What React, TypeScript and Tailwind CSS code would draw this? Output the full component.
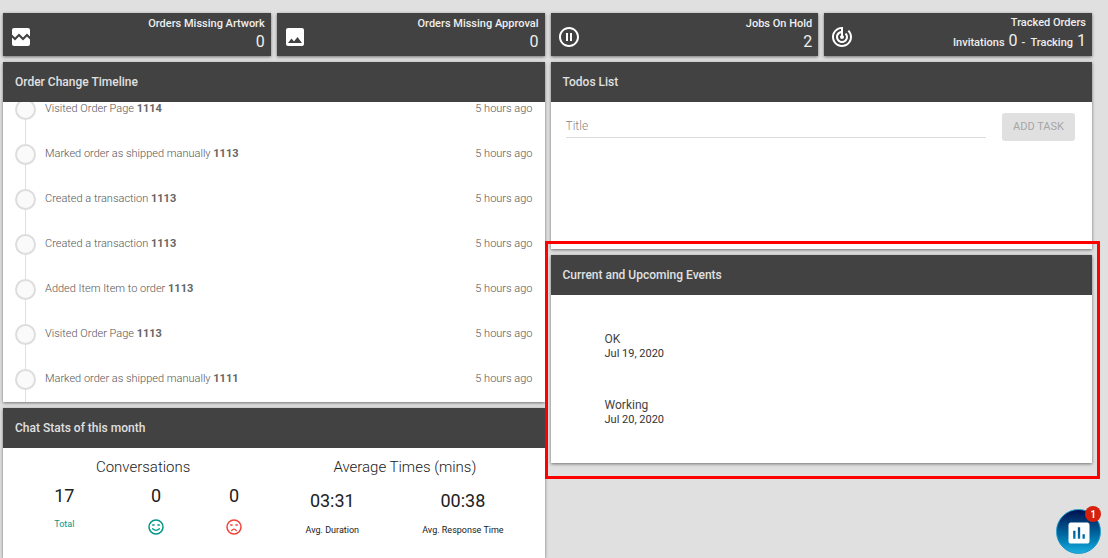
import type { ReactNode } from 'react';
import {
  MdBrokenImage,
  MdImage,
  MdInsertChart,
  MdPauseCircleOutline,
  MdTrackChanges,
} from 'react-icons/md';

const timeline = [
  { id: 1, text: 'Visited Order Page', order: '1114' },
  { id: 2, text: 'Marked order as shipped manually', order: '1113' },
  { id: 3, text: 'Created a transaction', order: '1113' },
  { id: 4, text: 'Created a transaction', order: '1113' },
  { id: 5, text: 'Added Item Item to order', order: '1113' },
  { id: 6, text: 'Visited Order Page', order: '1113' },
  { id: 7, text: 'Marked order as shipped manually', order: '1111' },
];

const events = [
  { title: 'OK', date: 'Jul 19, 2020' },
  { title: 'Working', date: 'Jul 20, 2020' },
];

const cardShadow = 'shadow-[0_1px_3px_rgba(0,0,0,0.5)]';

function Face({ mouth, className }: { mouth: string; className: string }) {
  return (
    <svg
      viewBox="0 0 16 16"
      fill="none"
      stroke="currentColor"
      strokeLinecap="round"
      className={`mx-auto mt-[7px] h-4 w-4 ${className}`}
      aria-hidden="true"
    >
      <circle cx="8" cy="8" r="7" strokeWidth="1.5" />
      <path d="M4.8 6h1.2M10 6h1.2" strokeWidth="1.6" />
      <path d={mouth} strokeWidth="1.3" />
    </svg>
  );
}

function StatCard({ icon, title, children }: { icon: ReactNode; title: string; children: ReactNode }) {
  return (
    <div className={`flex h-[43px] items-center justify-between bg-[#424242] px-1.5 text-white ${cardShadow}`}>
      <span className="pt-1 text-2xl">{icon}</span>
      <div className="pb-0.5 text-right text-[#eeeeee]">
        <h3 className="text-[11px] leading-4 font-medium">{title}</h3>
        <p className="text-[16px] leading-5">{children}</p>
      </div>
    </div>
  );
}

function Card({ title, className = '', children }: { title: string; className?: string; children: ReactNode }) {
  return (
    <section className={`flex flex-col bg-white ${cardShadow} ${className}`}>
      <h2 className="flex h-10 shrink-0 items-center bg-[#424242] px-3 text-[12px] font-medium text-[#e0e0e0]">
        {title}
      </h2>
      {children}
    </section>
  );
}

function Timeline() {
  return (
    <Card title="Order Change Timeline" className="h-[340px]">
      <div className="min-h-0 flex-1 overflow-hidden">
        <ol className="-mt-[15px]">
          {timeline.map((item) => (
            <li key={item.id} className="flex h-[45px] gap-[9px] px-3 text-[11px] font-light text-[#555555]">
              <div className="flex w-[21px] flex-col items-center">
                <span className="h-3 w-px bg-[#e0e0e0]" />
                <span className="h-[21px] w-[21px] shrink-0 rounded-full border-2 border-[#dddddd] bg-[#fafafa]" />
                <span className="w-px flex-1 bg-[#e0e0e0]" />
              </div>
              <p className="flex-1 pt-3 leading-5">
                {item.text} <b className="font-bold text-[#666666]">{item.order}</b>
              </p>
              <time className="pt-3 leading-5">5 hours ago</time>
            </li>
          ))}
        </ol>
      </div>
    </Card>
  );
}

function ChatStats() {
  return (
    <Card title="Chat Stats of this month" className="flex-1">
      <div className="grid grid-cols-[280fr_261fr] pt-[7px] text-center text-[#212121]">
        <div>
          <h3 className="text-[15px] leading-6 font-light">Conversations</h3>
          <div className="grid grid-cols-[122fr_61fr_94fr] pt-px pr-0.5">
            <div>
              <p className="text-[18px] leading-8">17</p>
              <p className="pt-1 text-[9px] leading-4 text-[#009688]">Total</p>
            </div>
            <div>
              <p className="text-[18px] leading-8">0</p>
              <Face mouth="M4.6 9.8q3.4 3.2 6.8 0" className="text-[#009688]" />
            </div>
            <div>
              <p className="text-[18px] leading-8">0</p>
              <Face mouth="M5.6 11.6q2.4-3 4.8 0" className="text-[#f44336]" />
            </div>
          </div>
        </div>
        <div>
          <h3 className="pr-[18px] text-[15px] leading-6 font-light">Average Times (mins)</h3>
          <div className="grid grid-cols-[98fr_163fr] pt-1">
            <div>
              <p className="text-[18px] leading-9">03:31</p>
              <p className="pt-[3px] text-[9px] leading-4">Avg. Duration</p>
            </div>
            <div>
              <p className="text-[18px] leading-9">00:38</p>
              <p className="pt-[3px] text-[9px] leading-4">Avg. Response Time</p>
            </div>
          </div>
        </div>
      </div>
    </Card>
  );
}

function Todos() {
  return (
    <Card title="Todos List" className="h-[187px]">
      <form className="flex items-start gap-4 pt-[11px] pr-[17px] pl-[15px]">
        <input
          type="text"
          aria-label="Title"
          placeholder="Title"
          className="h-[25px] min-w-0 flex-1 border-b border-[#dddddd] pt-0.5 text-[12px] font-light outline-none placeholder:text-[#888888]"
        />
        <button
          type="button"
          disabled
          className="h-7 w-[73px] rounded-[3px] bg-[#e0e0e0] text-[11px] text-[#a6a6a6]"
        >
          ADD TASK
        </button>
      </form>
    </Card>
  );
}

function Events() {
  return (
    <div className="relative">
      <Card title="Current and Upcoming Events" className="h-[208px]">
        <ul className="flex flex-col gap-9 pt-9 pl-[54px] text-[#333333]">
          {events.map((event) => (
            <li key={event.title}>
              <p className="text-[12px] leading-4 text-[#444444]">{event.title}</p>
              <p className="text-[11px] leading-[14px]">{event.date}</p>
            </li>
          ))}
        </ul>
      </Card>
      <div className="pointer-events-none absolute -top-[14px] -right-2 -bottom-4 -left-1.5 border-3 border-[#ff0000]" />
    </div>
  );
}

export default function App() {
  return (
    <main className="flex h-screen flex-col gap-1.5 overflow-hidden bg-[#e0e0e0] pt-[13px] pr-4 pl-[3px] font-[Roboto,sans-serif]">
      <div className="grid grid-cols-4 gap-1.5">
        <StatCard icon={<MdBrokenImage />} title="Orders Missing Artwork">0</StatCard>
        <StatCard icon={<MdImage />} title="Orders Missing Approval">0</StatCard>
        <StatCard icon={<MdPauseCircleOutline />} title="Jobs On Hold">2</StatCard>
        <StatCard icon={<MdTrackChanges />} title="Tracked Orders">
          <span className="text-[11px] font-medium">Invitations</span> 0{' '}
          <span className="text-[11px] font-medium">-&nbsp; Tracking</span> 1
        </StatCard>
      </div>
      <div className="grid min-h-0 flex-1 grid-cols-2 gap-1.5">
        <div className="flex min-h-0 flex-col gap-1.5">
          <Timeline />
          <ChatStats />
        </div>
        <div className="flex flex-col gap-1.5">
          <Todos />
          <Events />
        </div>
      </div>
      <button
        type="button"
        aria-label="Statistics"
        className="fixed right-[7px] bottom-1 flex h-[45px] w-[45px] items-center justify-center rounded-full border border-[#1496c8] bg-linear-to-b from-[#001050] to-[#1caee0] pt-0.5 text-[28px] text-white"
      >
        <MdInsertChart />
        <span className="absolute -top-1 -right-px flex h-4 w-4 items-center justify-center rounded-full bg-[#d8200f] text-[10px] font-bold">
          1
        </span>
      </button>
    </main>
  );
}
